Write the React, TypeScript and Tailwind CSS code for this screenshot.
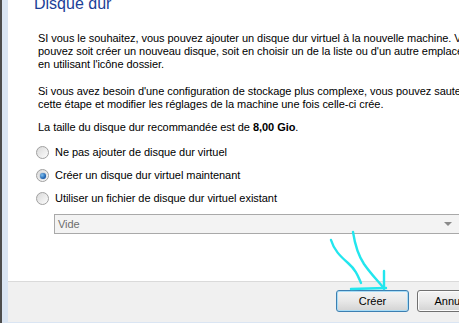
import React from 'react';

const Radio: React.FC<{ checked?: boolean; label: string }> = ({ checked, label }) => (
  <div className="flex items-center h-[23px]">
    <div className="w-[13px] h-[13px] rounded-full border border-[#a0a0a0] bg-gradient-to-br from-[#d9d9d9] to-[#fdfdfd] flex items-center justify-center ml-[1px]">
      {checked && (
        <div className="w-[6px] h-[6px] rounded-full bg-[radial-gradient(circle_at_35%_35%,#7fc0f0,#1558a8_70%)] shadow-[0_0_1px_#0b3d7a]" />
      )}
    </div>
    <span className="ml-[6px]">{label}</span>
  </div>
);

const App: React.FC = () => {
  return (
    <div className="w-[459px] h-[323px] overflow-hidden flex bg-white text-[11px] leading-[13px] text-black" style={{ fontFamily: '"Liberation Sans", Arial, sans-serif' }}>
      {/* window frame */}
      <div className="w-[2px] h-full bg-[#4d4d4d]" />
      <div className="w-[6px] h-full bg-[#dae5f3]" />

      <div className="flex-1 flex flex-col relative overflow-hidden">
        {/* content */}
        <div className="h-[281px] bg-white border-b border-[#dadada] box-content">
          <h1 className="text-[16px] leading-[20px] text-[#1c3f98] ml-[26px] -mt-[6px] whitespace-nowrap">Disque dur</h1>

          <div className="ml-[30px] mt-[18px] whitespace-nowrap tracking-[-0.05px]">
            <p>SI vous le souhaitez, vous pouvez ajouter un disque dur virtuel à la nouvelle machine. Vous</p>
            <p>pouvez soit créer un nouveau disque, soit en choisir un de la liste ou d'un autre emplacement</p>
            <p>en utilisant l'icône dossier.</p>

            <p className="mt-[14px]">Si vous avez besoin d'une configuration de stockage plus complexe, vous pouvez sauter</p>
            <p>cette étape et modifier les réglages de la machine une fois celle-ci crée.</p>

            <p className="mt-[10px]">La taille du disque dur recommandée est de <b>8,00 Gio</b>.</p>

            <div className="mt-[7px] -ml-[3px]">
              <Radio label="Ne pas ajouter de disque dur virtuel" />
              <Radio checked label="Créer un disque dur virtuel maintenant" />
              <Radio label="Utiliser un fichier de disque dur virtuel existant" />
            </div>

            <div className="ml-[16px] mt-[4px] w-[410px] h-[20px] border border-[#a9a9a9] bg-[#f3f3f3] flex items-center justify-between px-[3px]">
              <span className="text-[#6d6d6d]">Vide</span>
              <svg width="8" height="5" viewBox="0 0 8 5" className="mr-[8px]">
                <path d="M0 0 L8 0 L4 4 Z" fill="#8a8a8a" />
              </svg>
            </div>
          </div>
        </div>

        {/* footer */}
        <div className="h-[40px] bg-[#f0f0f0] flex items-start pt-[8px] pl-[328px] gap-[8px]">
          <button className="w-[73px] h-[22px] shrink-0 rounded-[3px] border border-[#3c7fb1] bg-gradient-to-b from-[#f4f4f4] via-[#e8e8e8] to-[#d3d3d3] shadow-[inset_0_0_0_1px_#a8dcf6] text-[11px]">Créer</button>
          <button className="w-[73px] h-[22px] shrink-0 rounded-[3px] border border-[#707070] bg-gradient-to-b from-[#f4f4f4] via-[#e8e8e8] to-[#d3d3d3] shadow-[inset_0_0_0_1px_#fcfcfc] text-[11px]">Annuler</button>
        </div>
        <div className="h-[1px] bg-[#dae5f3]" />

        {/* hand-drawn annotation */}
        <svg className="absolute left-0 top-0 pointer-events-none" width="451" height="323" viewBox="8 0 451 323">
          <g stroke="#22e6ee" strokeWidth="2.4" fill="none" strokeLinecap="round">
            <path d="M331 240 C334 250, 340 256, 348 263 C356 270, 358 276, 361 283" />
            <path d="M353 232 C355 245, 358 255, 364 264 C371 274, 377 280, 382 286" />
            <path d="M384 271 L384 289" />
            <path d="M351 289 L386 288" />
          </g>
        </svg>
      </div>
    </div>
  );
};

export default App;
